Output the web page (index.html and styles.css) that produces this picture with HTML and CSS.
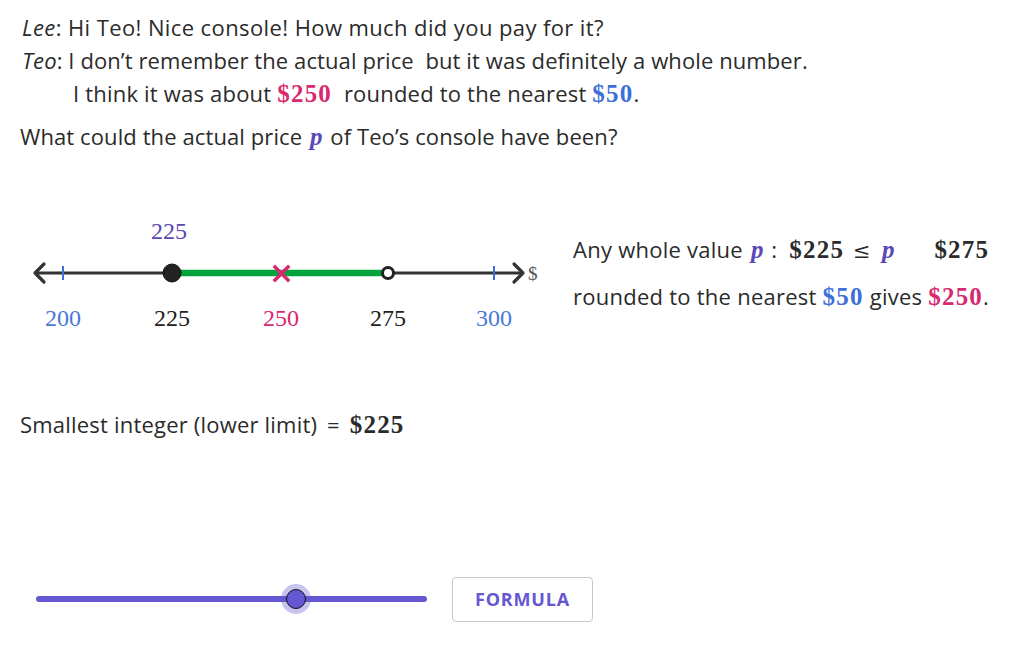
FILE: index.html
```html
<!DOCTYPE html>
<html lang="en">
<head>
<meta charset="utf-8">
<title>Rounding console price</title>
<link rel="stylesheet" href="styles.css">
</head>
<body>
<div class="app">
  <div class="dialog">
    <p class="line l1"><i>Lee</i>: Hi Teo! Nice console! How much did you pay for it?</p>
    <p class="line l2"><i>Teo</i>: I don’t remember the actual price&nbsp; but it was definitely a whole number.</p>
    <p class="line l3 indent">I think it was about <b class="m pink">$250</b>&nbsp; rounded to the nearest <b class="m blue">$50</b>.</p>
  </div>
  <p class="question">What could the actual price <b class="m var">p</b> of Teo’s console have been?</p>

  <div class="middle">
    <svg class="numline" width="540" height="120" viewBox="0 0 540 120">
      <line x1="15" y1="59" x2="503" y2="59" stroke="#333" stroke-width="3"/>
      <polyline points="24,50 15,59 24,68" fill="none" stroke="#333" stroke-width="3.2" stroke-linecap="round" stroke-linejoin="round"/>
      <polyline points="494,50 503,59 494,68" fill="none" stroke="#333" stroke-width="3.2" stroke-linecap="round" stroke-linejoin="round"/>
      <line x1="43" y1="52" x2="43" y2="66" stroke="#3d6fd9" stroke-width="2"/>
      <line x1="474" y1="52" x2="474" y2="66" stroke="#3d6fd9" stroke-width="2"/>
      <line x1="152" y1="59" x2="365" y2="59" stroke="#00a33c" stroke-width="6.5"/>
      <circle cx="152" cy="59" r="9" fill="#222" stroke="#111" stroke-width="1"/>
      <circle cx="368" cy="59" r="5.5" fill="#fff" stroke="#222" stroke-width="3"/>
      <g stroke="#d9296e" stroke-width="3.4" stroke-linecap="square">
        <line x1="255" y1="53" x2="268" y2="66"/>
        <line x1="268" y1="53" x2="255" y2="66"/>
      </g>
      <g class="lbls" font-family="Liberation Serif, serif" text-anchor="middle">
        <text class="purple" x="149" y="25">225</text>
        <text class="blue" x="43" y="112">200</text>
        <text class="dark" x="152" y="112">225</text>
        <text class="pink" x="261" y="112">250</text>
        <text class="dark" x="368" y="112">275</text>
        <text class="blue" x="474" y="112">300</text>
      </g>
      <text class="dollar" x="508" y="66">$</text>
    </svg>
    <div class="answer">
      <p class="aline">Any whole value <b class="m var">p</b> :&nbsp; <b class="m">$225</b> <span class="leq">≤</span> <b class="m var">p</b><span class="gap"></span><b class="m">$275</b></p>
      <p class="aline">rounded to the nearest <b class="m blue">$50</b> gives <b class="m pink">$250</b>.</p>
    </div>
  </div>

  <p class="smallest">Smallest integer (lower limit) <span class="eq">=</span> <b class="m">$225</b></p>

  <div class="controls">
    <div class="slider">
      <div class="track"></div>
      <div class="thumb"></div>
    </div>
    <button class="btn" type="button">FORMULA</button>
  </div>
</div>
</body>
</html>
```

FILE: styles.css
```css
* { box-sizing: border-box; }
html, body { margin: 0; padding: 0; background: #fff; }
body {
  font-family: "Open Sans", "DejaVu Sans", sans-serif;
  font-size: 22px;
  letter-spacing: 0.3px;
  color: #2b2b2b;
  width: 1032px;
  height: 645px;
  overflow: hidden;
}
p { margin: 0; }
.app { padding-left: 20px; }
.dialog { padding-top: 11px; }
.line { line-height: 33px; height: 33px; white-space: nowrap; }
.line i { font-style: italic; }
.l1 { padding-left: 2px; letter-spacing: 0.4px; }
.l2 { padding-left: 2px; letter-spacing: 0.1px; }
.l3 { letter-spacing: 0.2px; }
.indent { padding-left: 53px; }
.m {
  font-family: "Liberation Serif", "DejaVu Serif", serif;
  font-weight: bold;
  font-size: 25px;
  letter-spacing: 1.2px;
}
.m.var { font-style: italic; letter-spacing: 0; margin: 0 2px; }
.pink { color: #d9296e; fill: #d9296e; }
.blue { color: #3d6fd9; fill: #4a78d8; }
.var { color: #5a48b8; }
.purple { fill: #5847b0; }
.dark { fill: #222; }
.question { margin-top: 10px; line-height: 33px; height: 33px; white-space: nowrap; letter-spacing: 0.1px; }

.middle { display: flex; margin-top: 61px; height: 120px; }
.numline { display: block; flex: none; }
.lbls { font-family: "Liberation Serif", "DejaVu Serif", serif; font-size: 24px; letter-spacing: 0; }
.dollar { font-family: "Liberation Serif", "DejaVu Serif", serif; font-size: 19px; fill: #555; letter-spacing: 0; }
.answer { margin-left: 13px; padding-top: 12px; letter-spacing: 0.25px; }
.aline { line-height: 47px; height: 47px; white-space: nowrap; }
.leq { font-family: "DejaVu Serif", serif; font-size: 21px; margin: 0 3px; }
.gap { display: inline-block; width: 38px; }

.smallest { margin-top: 74px; line-height: 33px; height: 33px; white-space: nowrap; letter-spacing: 0.2px; }
.eq { margin: 0 4px; }

.controls { display: flex; align-items: center; margin-top: 136px; height: 44px; }
.slider { position: relative; margin-left: 16px; width: 391px; height: 30px; display: flex; align-items: center; }
.track { width: 100%; height: 6px; border-radius: 3px; background: #6557d2; }
.thumb {
  position: absolute;
  left: 260px;
  top: 50%;
  width: 20px;
  height: 20px;
  margin: -10px 0 0 -10px;
  border-radius: 50%;
  background: #6557d2;
  border: 1.5px solid #111;
  box-shadow: 0 0 0 5px rgba(101, 87, 210, 0.35);
}
.btn {
  margin-left: 25px;
  width: 141px;
  height: 45px;
  border: 1px solid #c8c8c8;
  border-radius: 4px;
  background: #fff;
  color: #6557d2;
  font-family: "Open Sans", Roboto, sans-serif;
  font-weight: bold;
  font-size: 18px;
  letter-spacing: 0.8px;
  padding: 0;
}
```
